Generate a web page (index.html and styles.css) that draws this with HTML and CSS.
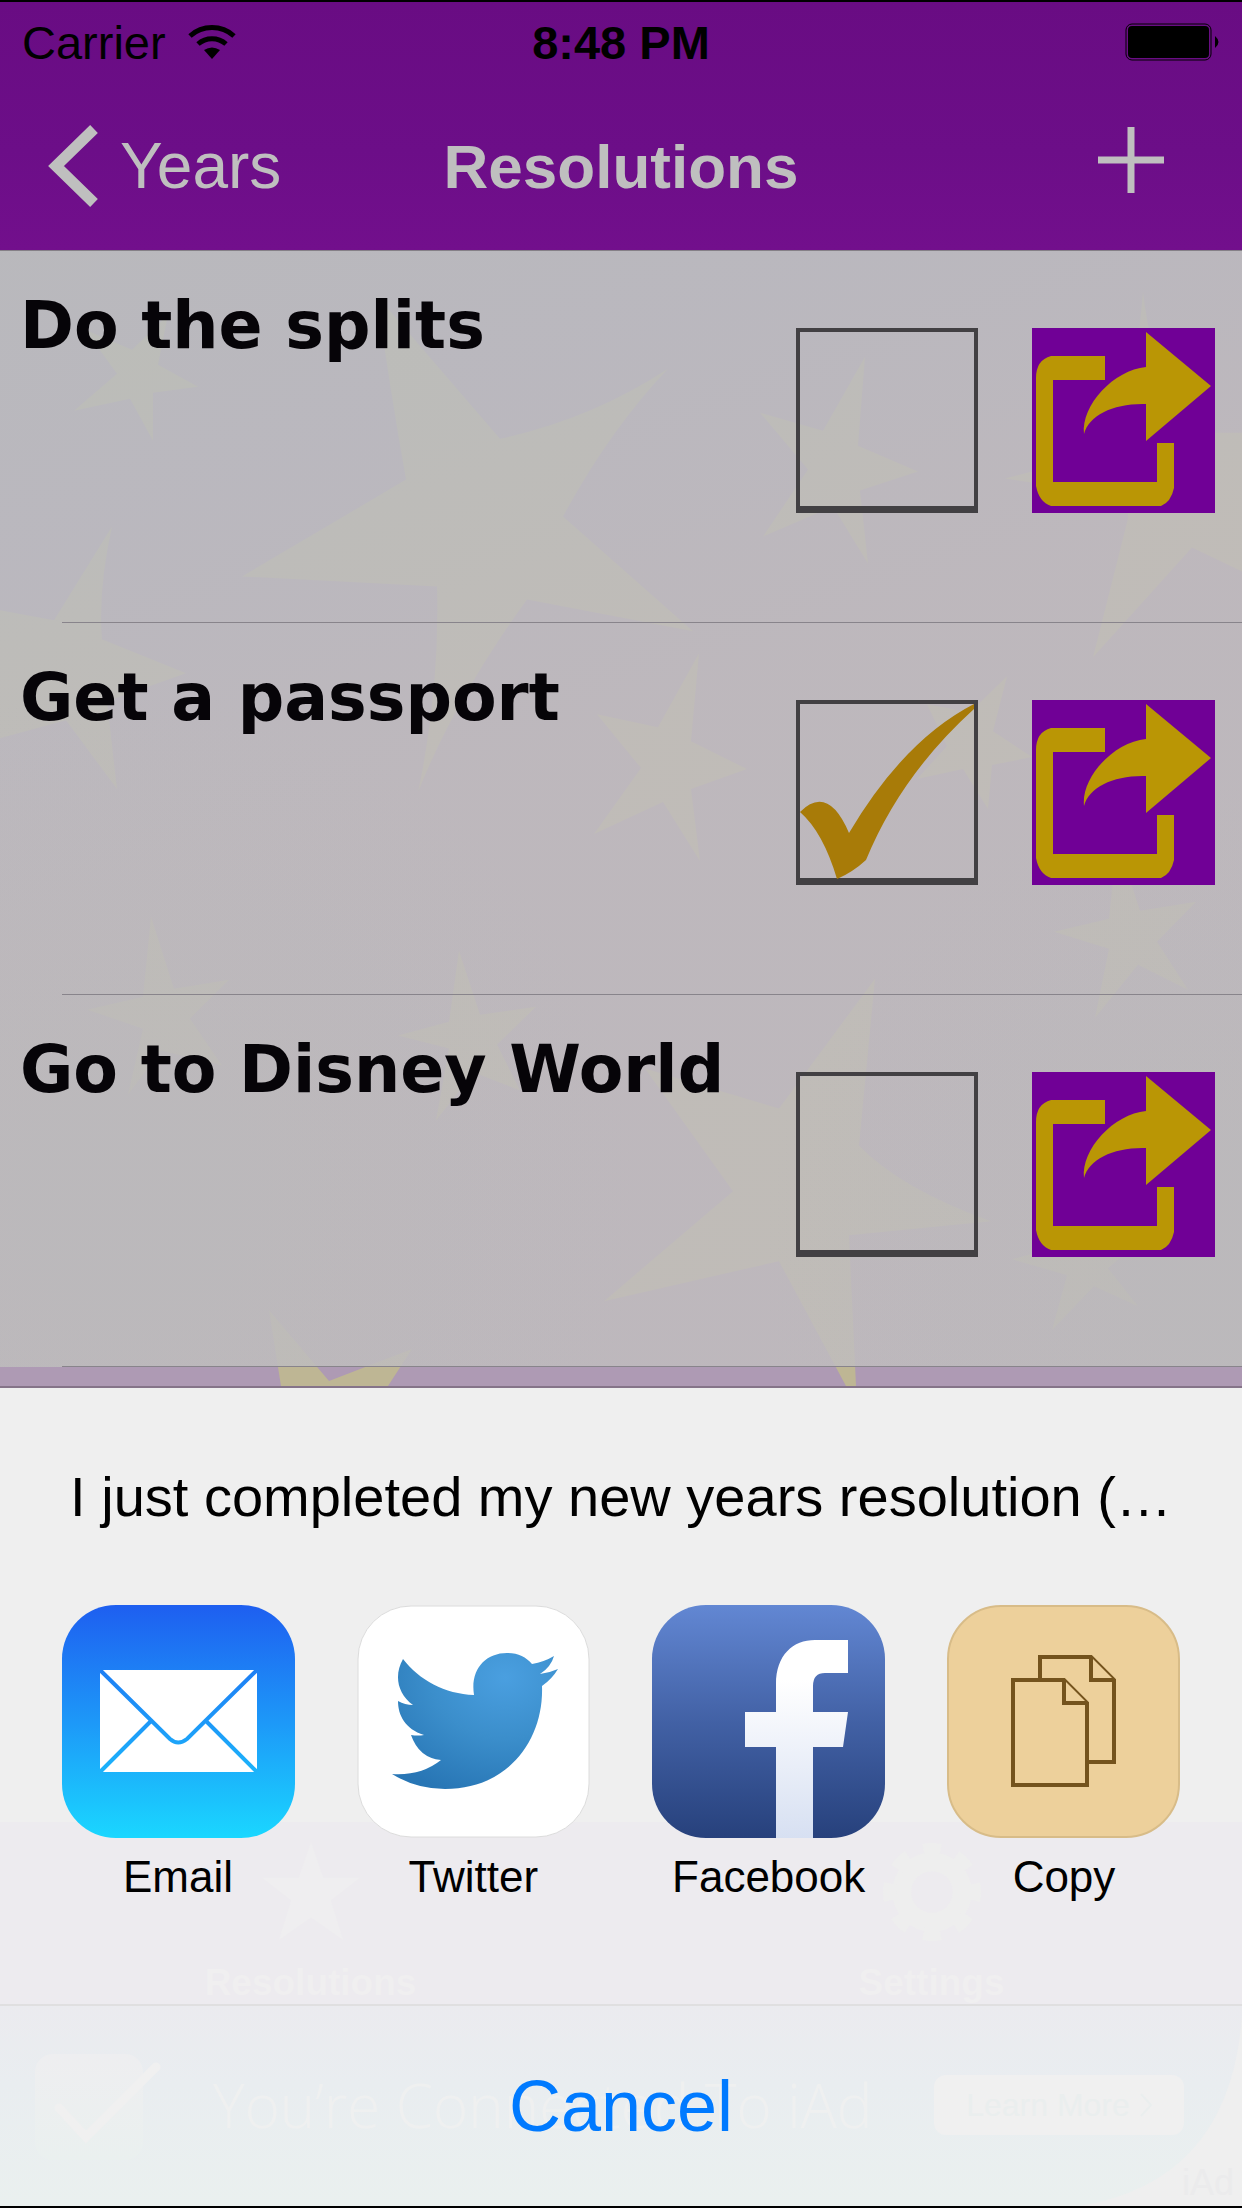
FILE: index.html
```
<!DOCTYPE html>
<html lang="en">

<head>
    <meta charset="UTF-8">
    <meta name="viewport" content="width=device-width, initial-scale=1.0">
    <title>Resolutions</title>

    <link rel="stylesheet" href="styles.css">
</head>

<body>
    <header class="header">
        <div class="status-bar">
            <div class="carrier">
                <span>Carrier</span>
                <svg class="wifi" viewBox="0 0 48 36" aria-hidden="true">
                    <path d="M24 35l-8-9q8-5 16 0z" />
                    <path d="M10 20a21 21 0 0 1 28 0M2 12a33 33 0 0 1 44 0" fill="none" stroke="#000" stroke-width="5" />
                </svg>
            </div>
            <span class="time">8:48 PM</span>
            <svg class="battery" viewBox="0 0 95 38" aria-hidden="true">
                <rect x="1" y="1" width="85" height="36" rx="6" fill="none" stroke="#000" stroke-width="1" />
                <rect x="3" y="3" width="81" height="32" rx="4" />
                <path d="M90 13q7 6 0 12z" />
            </svg>
        </div>
        <nav class="nav-bar">
            <a class="back" href="#">
                <svg class="chevron" viewBox="0 0 50 82" aria-hidden="true">
                    <path d="M46 4L8 41l38 37" />
                </svg>
                <span>Years</span>
            </a>
            <h1>Resolutions</h1>
            <button class="add" type="button" aria-label="Add resolution">
                <svg viewBox="0 0 66 66" aria-hidden="true">
                    <path d="M33 0v66M0 33h66" />
                </svg>
            </button>
        </nav>
    </header>

    <main class="list">
        <svg class="stars" viewBox="0 251 1242 1137" preserveAspectRatio="none" aria-hidden="true">
            <path d="M377 296L500 439Q590 420 668 369Q610 430 563 517L693 632L527 600Q455 700 418 793Q440 690 437 587L242 577L406 480Q390 390 377 296z" />
            <path d="M85 330L132 350L168 315L158 365L198 387L153 393V441L130 399L74 411L117 374z" />
            <path d="M112 527Q98 590 102 640L186 674L107 702L117 790L66 721L0 739V611L54 621z" />
            <path d="M699 654L691 742L747 770L691 790L700 862L663 803L594 835L641 769L597 715L658 728z" />
            <path d="M865 357L858 446L918 472L860 491L868 564L833 507L763 537L808 470L760 413L823 431z" />
            <path d="M1143 292Q1155 390 1193 433H1242V572L1192 548L1093 658L1128 519V497L1005 479L1128 446z" />
            <path d="M1007 677L993 732L1032 758L992 766L988 810L963 770L917 780L947 747L927 705L970 713z" />
            <path d="M1117 841L1140 912L1196 903L1157 943L1188 991L1138 966L1095 1019L1109 950L1054 933L1109 920z" />
            <path d="M875 980L859 1147Q900 1190 991 1223L849 1237L856 1388H846L779 1263L604 1303L733 1193L645 1070L779 1110z" />
            <path d="M1073 1188L1094 1241L1147 1236L1108 1270L1138 1308L1094 1288L1052 1332L1067 1277L1012 1261L1063 1247z" />
            <path d="M151 918L174 990L229 981L190 1020L222 1067L161 1052L128 1096L143 1030L87 1011L143 998z" />
            <path d="M459 952L480 1016L536 1008L497 1046L520 1092L474 1074L436 1122L449 1050L398 1037L449 1023z" />
            <path d="M269 1312L329 1383L412 1351L388 1388H281z" />
        </svg>

        <ul class="rows">
            <li class="row">
                <h2 id="r1">Do the splits</h2>
                <input class="done" type="checkbox" aria-labelledby="r1">
                <button class="share" type="button" aria-label="Share">
                    <svg viewBox="0 0 183 185" aria-hidden="true">
                        <path d="M73 28H19Q4 32 4 50V158Q7 174 19 178H129Q139 174 142 160V115H125V154H21V52H73z" />
                        <path d="M52 106C49 77 82 42 114 39V4L179 58L114 113V76C82 75 57 87 52 106z" />
                    </svg>
                </button>
            </li>
            <li class="row">
                <h2 id="r2">Get a passport</h2>
                <input class="done" type="checkbox" aria-labelledby="r2" checked>
                <svg class="tick" viewBox="0 0 182 185" aria-hidden="true">
                    <path d="M4 112Q32 84 53 133Q108 40 178 4V9Q105 75 70 160Q57 172 41 179Q27 132 4 112z" />
                </svg>
                <button class="share" type="button" aria-label="Share">
                    <svg viewBox="0 0 183 185" aria-hidden="true">
                        <path d="M73 28H19Q4 32 4 50V158Q7 174 19 178H129Q139 174 142 160V115H125V154H21V52H73z" />
                        <path d="M52 106C49 77 82 42 114 39V4L179 58L114 113V76C82 75 57 87 52 106z" />
                    </svg>
                </button>
            </li>
            <li class="row">
                <h2 id="r3">Go to Disney World</h2>
                <input class="done" type="checkbox" aria-labelledby="r3">
                <button class="share" type="button" aria-label="Share">
                    <svg viewBox="0 0 183 185" aria-hidden="true">
                        <path d="M73 28H19Q4 32 4 50V158Q7 174 19 178H129Q139 174 142 160V115H125V154H21V52H73z" />
                        <path d="M52 106C49 77 82 42 114 39V4L179 58L114 113V76C82 75 57 87 52 106z" />
                    </svg>
                </button>
            </li>
        </ul>
    </main>

    <section class="sheet">
        <!-- tab bar and ad banner showing faintly through the sheet -->
        <div class="behind" aria-hidden="true">
            <div class="tabs">
                <div class="tab">
                    <svg viewBox="0 0 106 106">
                        <path d="M53 0L66 38H105L74 62L87 104L53 80L19 104L32 62L1 38H40z" />
                    </svg>
                    <span>Resolutions</span>
                </div>
                <div class="tab">
                    <svg viewBox="0 0 106 106">
                        <circle cx="53" cy="53" r="32" fill="none" stroke="#eeeeee" stroke-width="20" />
                        <circle cx="53" cy="53" r="45" fill="none" stroke="#eeeeee" stroke-width="14" stroke-dasharray="18 17.3" stroke-dashoffset="9" />
                    </svg>
                    <span>Settings</span>
                </div>
            </div>
            <div class="ad">
                <svg class="ad-check" viewBox="0 0 130 110">
                    <rect x="0" y="4" width="108" height="106" rx="18" fill="url(#ad-box)" />
                    <path d="M24 58L51 87L121 17" fill="none" stroke="#f0f0f0" stroke-width="9" stroke-linecap="round" />
                    <defs>
                        <linearGradient id="ad-box" x1="0" y1="0" x2="0" y2="1">
                            <stop offset="0" stop-color="#eeeef0" />
                            <stop offset="1" stop-color="#eaf0ef" />
                        </linearGradient>
                    </defs>
                </svg>
                <span class="ad-text">You’re Connected To iAd</span>
                <span class="ad-more">Learn More
                    <svg viewBox="0 0 12 24"><path d="M1 1l10 11L1 23" /></svg>
                </span>
                <svg class="ad-curve" viewBox="0 0 162 190">
                    <path d="M162 0Q150 165 0 190H162z" />
                </svg>
                <span class="ad-brand">iAd</span>
            </div>
        </div>

        <div class="share-panel">
            <p class="message">I just completed my new years resolution (…</p>
            <div class="apps">
                <button class="app" type="button">
                    <svg viewBox="0 0 233 233" aria-hidden="true">
                        <defs>
                            <linearGradient id="mail" gradientUnits="userSpaceOnUse" x1="0" y1="0" x2="0" y2="233">
                                <stop offset="0" stop-color="#1e5ff0" />
                                <stop offset="0.5" stop-color="#1d98f8" />
                                <stop offset="1" stop-color="#1ad7ff" />
                            </linearGradient>
                        </defs>
                        <rect width="233" height="233" rx="54" fill="url(#mail)" />
                        <rect x="38" y="65" width="157" height="102" rx="2" fill="#fff" />
                        <path d="M38 65L108 134Q116 141 125 134L195 65M38 167L89 116M195 167L144 116" fill="none" stroke="url(#mail)" stroke-width="4" />
                    </svg>
                    <span>Email</span>
                </button>
                <button class="app" type="button">
                    <svg viewBox="0 0 233 233" aria-hidden="true">
                        <defs>
                            <radialGradient id="bird" cx="0.68" cy="0.18" r="0.9">
                                <stop offset="0" stop-color="#4a9fe0" />
                                <stop offset="0.5" stop-color="#3b8ecb" />
                                <stop offset="1" stop-color="#2876b5" />
                            </radialGradient>
                        </defs>
                        <rect x="1" y="1" width="231" height="231" rx="53" fill="#fff" stroke="#dcdcdc" stroke-width="1" />
                        <path d="M46 54C62 75 88 89 117 90C113 65 128 48 150 48C161 48 169 52 175 59Q187 57 197 51Q194 62 183 69Q192 68 201 64Q195 74 185 81C187 134 152 184 88 184Q59 184 35 169Q64 171 84 155Q62 153 54 130Q61 131 67 130C48 124 41 110 41 96Q48 100 56 100C40 88 37 70 46 54z" fill="url(#bird)" />
                    </svg>
                    <span>Twitter</span>
                </button>
                <button class="app" type="button">
                    <svg viewBox="0 0 233 233" aria-hidden="true">
                        <defs>
                            <linearGradient id="fb" x1="0" y1="0" x2="0" y2="1">
                                <stop offset="0" stop-color="#6287d3" />
                                <stop offset="0.5" stop-color="#4261a5" />
                                <stop offset="1" stop-color="#27417c" />
                            </linearGradient>
                            <linearGradient id="fb-mark" x1="0" y1="0" x2="0" y2="1">
                                <stop offset="0.2" stop-color="#fff" />
                                <stop offset="1" stop-color="#d7e0f2" />
                            </linearGradient>
                        </defs>
                        <rect width="233" height="233" rx="54" fill="url(#fb)" />
                        <path d="M124 233V142H93V107H124V79C124 50 141 35 163 35H196V68H173Q161 68 161 81V107H196L191 142H161V233z" fill="url(#fb-mark)" />
                    </svg>
                    <span>Facebook</span>
                </button>
                <button class="app" type="button">
                    <svg viewBox="0 0 233 233" aria-hidden="true">
                        <rect x="1" y="1" width="231" height="231" rx="53" fill="#edd09b" stroke="#d8bc88" stroke-width="2" />
                        <g fill="#edd09b" stroke="#74531d" stroke-width="4">
                            <path d="M93 52H144L167 75V157H93z" />
                            <path d="M144 52V75H167" />
                            <path d="M66 75H117L140 98V180H66z" />
                            <path d="M117 75V98H140" />
                        </g>
                    </svg>
                    <span>Copy</span>
                </button>
            </div>
        </div>
        <button class="cancel" type="button">Cancel</button>
    </section>
</body>
</html>
```
FILE: styles.css
```
* {
    box-sizing: border-box;
}

body {
    margin: 0;
    min-height: 100vh;
    display: flex;
    flex-direction: column;
    font-family: "Liberation Sans", Arial, sans-serif;
    color: #000;
    background-color: #efefef;
    border-top: 2px solid #000;
    border-bottom: 2px solid #000;
}

button {
    font-family: inherit;
    color: inherit;
    background: none;
    border: none;
    padding: 0;
    cursor: pointer;
}

svg {
    display: block;
}

/* header */
.header {
    background: linear-gradient(#690c83, #6c0e88 60%, #720f8c);
    color: #bfbfbf;
    border-bottom: 1px solid #858087;
}

.status-bar,
.nav-bar {
    display: grid;
    grid-template-columns: 1fr auto 1fr;
    align-items: center;
}

.status-bar {
    height: 80px;
    padding: 0 22px;
    color: #000;
    font-size: 47px;
}

.carrier {
    display: flex;
    align-items: center;
    gap: 22px;
}

.wifi {
    width: 48px;
    height: 36px;
}

.time {
    font-weight: bold;
}

.battery {
    width: 95px;
    height: 38px;
    justify-self: end;
}

.nav-bar {
    height: 168px;
    padding: 0 48px;
}

.back {
    display: flex;
    align-items: center;
    gap: 22px;
    color: inherit;
    text-decoration: none;
    font-size: 64px;
}

.chevron {
    width: 50px;
    height: 82px;
    fill: none;
    stroke: #bfbfbf;
    stroke-width: 11;
}

.nav-bar h1 {
    margin: 0;
    font-size: 62px;
}

.add {
    justify-self: end;
    padding: 0 30px 12px;
}

.add svg {
    width: 66px;
    height: 66px;
    stroke: #bfbfbf;
    stroke-width: 7;
}

/* list */
.list {
    position: relative;
    padding-bottom: 19px;
    background-color: #ae9ab4;
    border-bottom: 2px solid #857489;
}

.stars {
    position: absolute;
    top: 0;
    left: 0;
    width: 100%;
    height: 100%;
    fill: #beb694;
}

.rows {
    position: relative;
    margin: 0;
    padding: 0;
    list-style-type: none;
    background:
        radial-gradient(circle at 10% 85%, rgba(185, 186, 186, 0.5), rgba(185, 186, 186, 0) 35%),
        radial-gradient(circle at 100% 90%, rgba(185, 186, 186, 0.5), rgba(185, 186, 186, 0) 30%),
        linear-gradient(160deg, rgba(187, 190, 190, 0.85), rgba(188, 189, 192, 0.85) 20%, rgba(192, 189, 190, 0.85) 45%);
}

.row {
    position: relative;
    display: flex;
    align-items: flex-start;
    height: 372px;
    padding: 77px 27px 0 20px;
}

.row::after {
    content: "";
    position: absolute;
    left: 62px;
    right: 0;
    bottom: 0;
    border-bottom: 1px solid #88848b;
}

.row h2 {
    flex: 1;
    margin: -40px 0 0;
    font-family: "DejaVu Sans", Verdana, sans-serif;
    font-size: 65px;
    line-height: 76px;
    color: #060408;
}

.done {
    appearance: none;
    width: 182px;
    height: 185px;
    margin: 0 54px 0 0;
    border: 4px solid #424043;
    border-bottom-width: 7px;
    cursor: pointer;
}

.tick {
    position: absolute;
    right: 264px;
    top: 77px;
    width: 182px;
    height: 185px;
    fill: #a87b08;
    pointer-events: none;
}

.share {
    width: 183px;
    height: 185px;
    background-color: #700096;
}

.share svg {
    width: 100%;
    fill: #ba9605;
}

/* share sheet */
.sheet {
    position: relative;
    flex: 1;
    display: flex;
    flex-direction: column;
    background-color: #efefef;
}

.share-panel {
    position: relative;
    height: 616px;
    padding: 76px 61px 0;
}

.message {
    margin: 0 -20px;
    font-size: 56px;
    line-height: 66px;
    text-align: center;
    white-space: nowrap;
}

.apps {
    display: flex;
    justify-content: space-between;
    margin-top: 75px;
}

.app {
    display: flex;
    flex-direction: column;
    align-items: center;
    gap: 15px;
    width: 234px;
    font-size: 44px;
    line-height: 48px;
}

.app svg {
    width: 233px;
    height: 233px;
}

.cancel {
    position: relative;
    flex: 1;
    border-top: 2px solid #e0dfe0;
    font-size: 72px;
    color: #007aff;
}

/* dimmed screen below the sheet */
.behind {
    position: absolute;
    left: 0;
    right: 0;
    bottom: 0;
    overflow: hidden;
}

.tabs {
    display: flex;
    height: 182px;
    padding-top: 20px;
    background-color: #edebef;
}

.tab {
    flex: 1;
    display: flex;
    flex-direction: column;
    align-items: center;
    gap: 20px;
    font-size: 37px;
    font-weight: bold;
    line-height: 42px;
    color: #f0eff0;
}

.tab svg {
    width: 106px;
    height: 106px;
    fill: #efeef0;
}

.ad {
    position: relative;
    display: flex;
    align-items: center;
    height: 202px;
    padding: 0 58px 0 35px;
    background: linear-gradient(#ebebef, #e9edf0 40%, #eaf0ef);
    color: #eff0f0;
}

.ad-check {
    width: 130px;
    height: 110px;
}

.ad-text {
    flex: 1;
    padding-left: 48px;
    font-family: "Open Sans", sans-serif;
    font-size: 60px;
    white-space: nowrap;
    font-weight: 300;
}

.ad-more {
    display: flex;
    align-items: center;
    justify-content: center;
    gap: 10px;
    width: 250px;
    height: 60px;
    border-radius: 12px;
    background-color: #f0f0f0;
    color: #eaeeee;
    font-size: 32px;
}

.ad-more svg {
    width: 12px;
    height: 24px;
    fill: none;
    stroke: #eaeeee;
    stroke-width: 2;
}

.ad-curve {
    position: absolute;
    right: 0;
    bottom: 0;
    width: 162px;
    height: 190px;
    fill: #efefef;
}

.ad-brand {
    position: absolute;
    right: 8px;
    bottom: 2px;
    font-size: 36px;
    color: #ebebec;
}
```
